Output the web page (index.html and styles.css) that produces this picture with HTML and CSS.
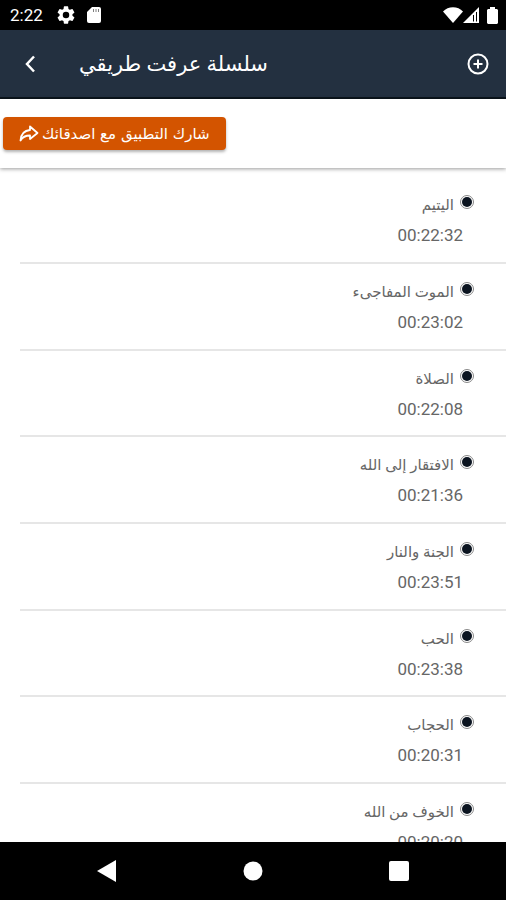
FILE: index.html
```html
<!DOCTYPE html>
<html lang="ar">
<head>
    <meta charset="UTF-8">
    <meta name="viewport" content="width=device-width, initial-scale=1.0">
    <title>سلسلة عرفت طريقي</title>
    <link rel="stylesheet" href="styles.css">
</head>
<body>
    <div class="status">
        <span class="clock">2:22</span>
        <svg class="gear" width="18" height="18" viewBox="2 2 20 20"><path fill="#fff" d="M19.14 12.94c.04-.3.06-.61.06-.94 0-.32-.02-.64-.07-.94l2.03-1.58a.49.49 0 0 0 .12-.61l-1.92-3.32a.49.49 0 0 0-.59-.22l-2.39.96c-.5-.38-1.03-.7-1.62-.94l-.36-2.54a.48.48 0 0 0-.48-.41h-3.84a.47.47 0 0 0-.47.41l-.36 2.54c-.59.24-1.13.57-1.62.94l-2.39-.96a.48.48 0 0 0-.59.22L2.74 8.87a.47.47 0 0 0 .12.61l2.03 1.58c-.05.3-.09.63-.09.94s.02.64.07.94l-2.03 1.58a.49.49 0 0 0-.12.61l1.92 3.32c.12.22.37.29.59.22l2.39-.96c.5.38 1.03.7 1.62.94l.36 2.54c.05.24.24.41.48.41h3.84c.24 0 .44-.17.47-.41l.36-2.54c.59-.24 1.13-.56 1.62-.94l2.39.96c.22.08.47 0 .59-.22l1.92-3.32a.47.47 0 0 0-.12-.61zM12 15.6a3.6 3.6 0 1 1 0-7.2 3.6 3.6 0 0 1 0 7.2z"/></svg>
        <svg class="card" width="14" height="16" viewBox="0 0 14 16"><path fill="#fff" d="M5 0h7a2 2 0 0 1 2 2v12a2 2 0 0 1-2 2H2a2 2 0 0 1-2-2V5z"/><path stroke="#000" d="M6.500 2v3M9 2v3M11.500 2v3" opacity=".5"/></svg>
        <div class="signals">
            <svg width="20" height="16" viewBox="0 0 20 16"><path fill="#fff" d="M10 16 0 4.500C5-1.300 15-1.300 20 4.500z"/></svg>
            <svg width="16" height="16" viewBox="0 0 16 16"><path fill="#fff" d="M16 0v16H0z"/><path fill="none" stroke="#000" d="M10.500 8v6.500M13.500 5v9.500"/></svg>
            <svg class="battery" width="11" height="17" viewBox="0 0 11 17"><path fill="#fff" d="M3 0h5v2h2l1 1v13l-1 1H1l-1-1V3l1-1h2z"/></svg>
        </div>
    </div>
    <header>
        <button class="iconBtn back" aria-label="رجوع">
            <svg width="10" height="18" viewBox="0 0 10 18"><path fill="none" stroke="#fff" stroke-width="2.500" d="M9 1.500 2 9l7 7.500"/></svg>
        </button>
        <h1 dir="rtl">سلسلة عرفت طريقي</h1>
        <button class="iconBtn add" aria-label="إضافة">
            <svg width="22" height="22" viewBox="0 0 22 22"><g fill="none" stroke="#fff" stroke-width="2"><circle cx="11" cy="11" r="9.500"/><path d="M11 6.500v9M6.500 11h9"/></g></svg>
        </button>
    </header>
    <div class="shareBar">
        <button class="share">
            <svg width="20" height="17" viewBox="0 0 20 17"><path fill="none" stroke="#fff" stroke-width="1.800" stroke-linejoin="round" d="M11 1.500 18.500 8 11 14v-3.500C6.500 10.500 3.500 12 1.500 15.500 2 9 5.500 5.500 11 5z"/></svg>
            <span dir="rtl">شارك التطبيق مع اصدقائك</span>
        </button>
    </div>
    <main dir="rtl">
        <ul>
            <li><h2><span class="dot"></span>اليتيم</h2><p>00:22:32</p></li>
            <li><h2><span class="dot"></span>الموت المفاجىء</h2><p>00:23:02</p></li>
            <li><h2><span class="dot"></span>الصلاة</h2><p>00:22:08</p></li>
            <li><h2><span class="dot"></span>الافتقار إلى الله</h2><p>00:21:36</p></li>
            <li><h2><span class="dot"></span>الجنة والنار</h2><p>00:23:51</p></li>
            <li><h2><span class="dot"></span>الحب</h2><p>00:23:38</p></li>
            <li><h2><span class="dot"></span>الحجاب</h2><p>00:20:31</p></li>
            <li><h2><span class="dot"></span>الخوف من الله</h2><p>00:20:20</p></li>
        </ul>
    </main>
    <nav>
        <button class="iconBtn" aria-label="Back"><svg width="20" height="22" viewBox="0 0 20 22"><path fill="#fff" d="M19 0v22L0 11z"/></svg></button>
        <button class="iconBtn" aria-label="Home"><svg width="20" height="20" viewBox="0 0 20 20"><circle fill="#fff" cx="10" cy="10" r="9.500"/></svg></button>
        <button class="iconBtn" aria-label="Recent"><svg width="20" height="20" viewBox="0 0 20 20"><rect fill="#fff" width="20" height="20" rx="2"/></svg></button>
    </nav>
</body>
</html>
```
FILE: styles.css
```css
* {
    margin: 0;
    padding: 0;
    box-sizing: border-box;
}
body {
    display: flex;
    flex-direction: column;
    height: 100vh;
    overflow: hidden;
    background-color: #fff;
    font-family: Roboto, "DejaVu Sans", sans-serif;
}
svg {
    display: block;
}
.status {
    display: flex;
    flex-shrink: 0;
    align-items: center;
    height: 30px;
    padding: 0 8px 0 10px;
    background-color: #000;
    color: #fff;
}
.clock {
    font-size: 17px;
    line-height: 30px;
}
.gear {
    margin-left: 14px;
}
.card {
    margin-left: 12px;
}
.signals {
    display: flex;
    align-items: center;
    margin-left: auto;
}
.battery {
    margin-left: 8px;
}
header {
    display: flex;
    flex-shrink: 0;
    align-items: center;
    height: 69px;
    padding: 0 16px 0 12px;
    background-color: #233040;
    border-bottom: 2px solid #0b141c;
    color: #fff;
}
h1 {
    margin-left: 31px;
    font-size: 21px;
    font-weight: normal;
    line-height: 32px;
}
.iconBtn {
    display: flex;
    align-items: center;
    justify-content: center;
    width: 36px;
    height: 36px;
    background: none;
    border: 0;
}
.add {
    width: 24px;
    margin-left: auto;
}
.shareBar {
    flex-shrink: 0;
    height: 69px;
    padding: 18px 3px;
    box-shadow: 0 1px 4px rgba(0, 0, 0, 0.4);
}
.share {
    display: flex;
    align-items: center;
    gap: 3px;
    height: 33px;
    padding: 0 16px;
    background-color: #d35400;
    border: 0;
    border-radius: 4px;
    box-shadow: 0 2px 3px rgba(0, 0, 0, 0.3);
    color: #fff;
    font-family: "DejaVu Sans", sans-serif;
    font-size: 15px;
}
main {
    flex: 1;
    min-height: 0;
    overflow: hidden;
    padding-top: 9px;
}
ul {
    margin-left: 20px;
    list-style: none;
}
li {
    height: 87px;
    padding: 14px 32px 0 0;
    border-bottom: 2px solid #e6e6e6;
}
li:nth-child(3n) {
    height: 86px;
}
h2 {
    display: flex;
    gap: 6px;
    color: #666;
    font-size: 15px;
    font-weight: normal;
    line-height: 28px;
}
.dot {
    width: 14px;
    height: 14px;
    margin-top: 4px;
    padding: 1px;
    background-color: #0b1420;
    background-clip: content-box;
    border: 1px solid #888;
    border-radius: 50%;
}
p {
    padding-right: 11px;
    color: #666;
    font-size: 17px;
    line-height: 32px;
}
nav {
    display: flex;
    flex-shrink: 0;
    align-items: center;
    justify-content: space-between;
    height: 58px;
    padding: 0 89px;
    background-color: #000;
}
```
